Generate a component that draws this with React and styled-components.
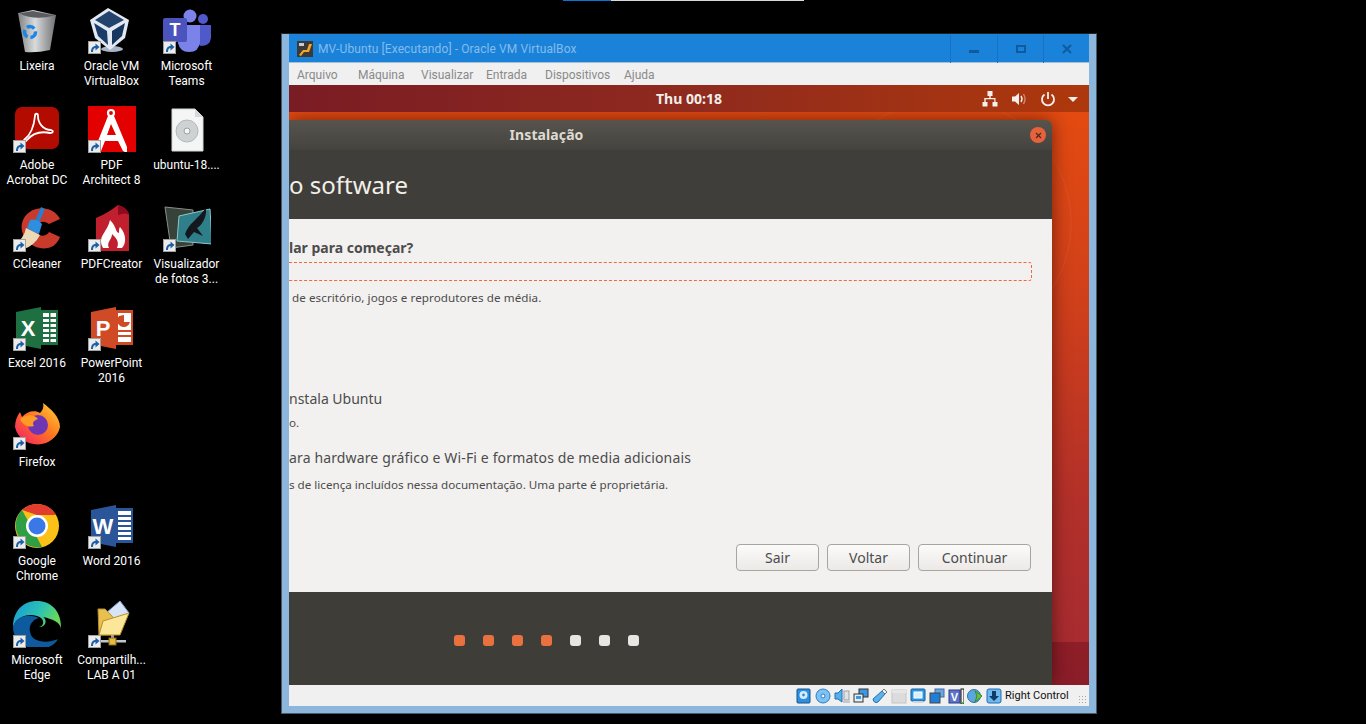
import React from 'react';
import styled, { createGlobalStyle } from 'styled-components';

const GlobalStyle = createGlobalStyle`
  html, body { margin: 0; padding: 0; background: #000; }
  * { box-sizing: border-box; }
`;

const Bin = () => (
  <svg viewBox="0 0 48 48">
    <defs>
      <linearGradient id="bin" x1="0" x2="1"><stop offset="0" stopColor="#7f8284" /><stop offset=".45" stopColor="#d9dbdc" /><stop offset="1" stopColor="#6f7173" /></linearGradient>
    </defs>
    <path d="M5 8 L20 5 L43 10 L37 45 Q24 48 12 47 Z" fill="url(#bin)" />
    <path d="M6.5 8.5 L20 6 L41.5 10.5 Q22 16 6.5 8.5 Z" fill="#5a5d60" />
    <circle cx="17" cy="27" r="5.5" fill="none" stroke="#1c86e6" strokeWidth="3.5" strokeDasharray="8 3" />
  </svg>
);
const VBox = () => (
  <svg viewBox="0 0 48 48">
    <ellipse cx="24" cy="44" rx="11" ry="3" fill="#a9b4c9" />
    <path d="M20 3 L41 15 L37 33 L22 45 L7 33 L2 15 Z" fill="#e3e9f3" />
    <path d="M21 6 L36 15 L21 23 L7 15 Z" fill="#23436d" />
    <path d="M6 18 L19 26 L20 40 L10 31 Z" fill="#1b3c66" />
    <path d="M24 26 L37 18 L34 31 L24 40 Z" fill="#16365e" />
  </svg>
);
const Teams = () => (
  <svg viewBox="0 0 48 48">
    <circle cx="27" cy="11" r="6.5" fill="#7b83eb" />
    <circle cx="40" cy="14" r="5" fill="#5059c9" />
    <path d="M33 20 H48 V33 Q47 41 38 41 L33 38 Z" fill="#5059c9" />
    <path d="M15 20 H37 V37 Q36 47 26 47 Q17 47 15 38 Z" fill="#7b83eb" />
    <rect x="0" y="13" width="24" height="24" rx="2" fill="#4b53bc" />
    <text x="12" y="31" textAnchor="middle" fill="#fff" fontSize="18" fontWeight="700" fontFamily="Liberation Sans">T</text>
  </svg>
);
const Acrobat = () => (
  <svg viewBox="0 0 48 48">
    <rect x="2" y="3" width="44" height="42" rx="7" fill="#b30b00" />
    <path d="M12 35 C17 31 21 22 22 12 C22 9 25 9 25 12 C25 19 30 26 38 26 C41 27 40 29 37 29 C28 27 20 29 14 36 C11 39 10 37 12 35 Z" fill="none" stroke="#fff" strokeWidth="1.8" />
  </svg>
);
const Architect = () => (
  <svg viewBox="0 0 48 48">
    <rect x="0" y="2" width="48" height="48" fill="#e30000" />
    <circle cx="23" cy="9" r="3" fill="none" stroke="#fff" strokeWidth="2.2" />
    <path d="M20 12 L6 47 L13 47 L17 37 H30 L35 47 L39 49 L39 43 L26 12 Z M19 31 L23 20 L28 31 Z" fill="#fff" fillRule="evenodd" />
  </svg>
);
const IsoFile = () => (
  <svg viewBox="0 0 48 48">
    <path d="M9 5 H32 L40 13 V47 H9 Z" fill="#f4f5f5" stroke="#d3d6d8" />
    <path d="M32 5 V13 H40 Z" fill="#d6d9dc" />
    <circle cx="24" cy="27" r="11" fill="#cfd2d4" stroke="#b4b8ba" />
    <circle cx="24" cy="27" r="3" fill="#f4f5f5" stroke="#9b9fa2" />
  </svg>
);
const CCleaner = () => (
  <svg viewBox="0 0 48 48">
    <path d="M47 16 C40 1 14 1 9 20 C6 34 20 48 35 45 C40 44 44 41 47 34 L36 29 C33 34 26 34 24 29 C21 22 28 15 36 21 Z" fill="#c9392c" />
    <path d="M28 4 L32 6 L26 20 L22 18 Z" fill="#2b7ecb" />
    <path d="M17 17 Q24 15 29 21 L26 31 Q20 29 14 25 Z" fill="#2e8fe0" />
    <path d="M13 25 L27 32 Q22 42 11 46 L1 41 Q11 36 13 25 Z" fill="#ecd9b6" />
  </svg>
);
const PdfCreator = () => (
  <svg viewBox="0 0 48 48">
    <path d="M8 15 Q20 10 30 2 Q40 5 41 12 V49 H8 Z" fill="#c01f2e" />
    <path d="M30 2 Q30 10 30 12 Q38 9 41 12 Q40 5 30 2 Z" fill="#8e0a1f" />
    <path d="M15 45 C9 33 19 30 22 17 C29 24 27 29 31 30 C31 27 31 25 32 24 C39 32 38 41 34 45 L29 45 C32 38 27 34 24 31 C24 37 18 39 21 45 Z" fill="#fff" />
  </svg>
);
const Viewer = () => (
  <svg viewBox="0 0 48 48">
    <path d="M2 4 L30 7 V42 L8 45 Z" fill="#37423a" stroke="#8a8f86" />
    <path d="M16 13 L47 6 L49 41 L14 38 Z" fill="#2e7f89" stroke="#8fc6c9" />
    <path d="M22 31 C26 20 34 17 43 5 C44 14 39 22 34 25 L40 33 L31 29 L25 36 Z" fill="#14171b" />
  </svg>
);
const OfficeDoc = ({ tile, page, letter, children }) => (
  <svg viewBox="0 0 48 48">
    <path d="M24 8 H45 V43 H24 Z" fill={page} />
    {children}
    <path d="M3 10 L28 5 V47 L3 42 Z" fill={tile} />
    <text x="15" y="34" textAnchor="middle" fill="#fff" fontSize="22" fontWeight="700" fontFamily="Liberation Sans">{letter}</text>
  </svg>
);
const lines = (x, w, c) => [15, 20, 25, 30, 35].map(y => <rect key={y} x={x} y={y} width={w} height="2" fill={c} />);
const Excel = () => <OfficeDoc tile="#1e6f42" page="#1e6f42" letter="X"><rect x="30" y="11" width="13" height="29" fill="#fff" />{lines(30, 13, '#1e6f42')}<rect x="36" y="11" width="1.5" height="29" fill="#1e6f42" /></OfficeDoc>;
const Word = () => <OfficeDoc tile="#2a5699" page="#2a5699" letter="W"><rect x="30" y="11" width="13" height="29" fill="#fff" />{lines(30, 13, '#2a5699')}</OfficeDoc>;
const PowerPoint = () => (
  <OfficeDoc tile="#d04a25" page="#d04a25" letter="P">
    <rect x="30" y="11" width="13" height="29" fill="#fff" />
    <path d="M31 14 a6.5 6.5 0 1 0 11 6 h-6 v-7z" fill="#d04a25" />
    <rect x="30" y="28" width="13" height="2" fill="#d04a25" /><rect x="30" y="33" width="13" height="2" fill="#d04a25" />
  </OfficeDoc>
);
const Firefox = () => (
  <svg viewBox="0 0 48 48">
    <defs>
      <linearGradient id="fx" x1="1" y1="0" x2="0" y2="1"><stop offset="0" stopColor="#ffd93a" /><stop offset=".45" stopColor="#ff7a1f" /><stop offset="1" stopColor="#f5156c" /></linearGradient>
    </defs>
    <path d="M30 2 C38 8 47 16 47 26 A23 22 0 0 1 2 26 C2 20 4 15 7 11 L9 16 C14 10 22 9 27 12 C30 9 31 6 30 2 Z" fill="url(#fx)" />
    <circle cx="25" cy="24" r="10" fill="#6e36b5" />
    <path d="M7 18 C14 12 22 14 25 18 C20 20 19 22 21 25 C15 27 10 24 7 18 Z" fill="#ff9a24" />
  </svg>
);
const Chrome = () => (
  <svg viewBox="0 0 48 48">
    <circle cx="24" cy="26" r="22" fill="#fbc116" />
    <path d="M24 4 A22 22 0 0 1 43 15 L24 15 L9 10 A22 22 0 0 1 24 4 Z" fill="#e33b2e" />
    <path d="M9 10 L19 28 L29 47 A22 22 0 0 1 9 10 Z" fill="#2f9e44" />
    <circle cx="24" cy="26" r="11" fill="#fff" />
    <circle cx="24" cy="26" r="8.5" fill="#3b78e7" />
  </svg>
);
const Edge = () => (
  <svg viewBox="0 0 48 48">
    <defs>
      <linearGradient id="eg" x1="0" y1="0" x2="1" y2=".4"><stop offset="0" stopColor="#1696d8" /><stop offset=".6" stopColor="#2cc2b4" /><stop offset="1" stopColor="#66d95a" /></linearGradient>
    </defs>
    <path d="M48 28 C48 12 38 2 24 2 C10 2 0 12 0 28 C4 18 14 14 24 17 C32 19 32 27 26 28 L48 30 Z" fill="url(#eg)" />
    <path d="M0 28 C0 42 12 50 26 50 C34 50 42 46 45 40 C36 44 22 44 18 36 C14 27 20 20 26 19 C14 14 2 18 0 28 Z" fill="#0d5a9e" />
    <path d="M26 28 C34 28 34 20 30 18 C40 20 48 24 48 30 C47 34 46 38 45 40 C36 43 26 40 26 28 Z" fill="#000" />
  </svg>
);
const SharedFolder = () => (
  <svg viewBox="0 0 48 48">
    <path d="M18 14 L32 2 L41 14 L30 26 Z" fill="#d6e4f6" stroke="#7aa0cf" />
    <path d="M10 10 H17 L22 15 L30 24 L24 36 H11 Z" fill="#e9bf4f" stroke="#b88f2a" />
    <path d="M15 22 L41 14 L32 36 H11 Z" fill="#fbe69a" stroke="#b88f2a" />
    <rect x="23" y="36" width="3" height="4" fill="#9aa0a6" />
    <rect x="12" y="41" width="26" height="2.5" fill="#c2c6ca" />
    <rect x="21" y="39" width="7" height="7" fill="#e6b93f" stroke="#8a6a1c" />
  </svg>
);

const desktop = [
  { name: 'Lixeira', art: Bin, plain: true },
  { name: 'Oracle VM\nVirtualBox', art: VBox },
  { name: 'Microsoft\nTeams', art: Teams },
  { name: 'Adobe\nAcrobat DC', art: Acrobat },
  { name: 'PDF\nArchitect 8', art: Architect },
  { name: 'ubuntu-18....', art: IsoFile, plain: true },
  { name: 'CCleaner', art: CCleaner },
  { name: 'PDFCreator', art: PdfCreator },
  { name: 'Visualizador\nde fotos 3...', art: Viewer },
  { name: 'Excel 2016', art: Excel },
  { name: 'PowerPoint\n2016', art: PowerPoint },
  null,
  { name: 'Firefox', art: Firefox },
  null,
  null,
  { name: 'Google\nChrome', art: Chrome },
  { name: 'Word 2016', art: Word },
  null,
  { name: 'Microsoft\nEdge', art: Edge },
  { name: 'Compartilh...\nLAB A 01', art: SharedFolder },
];

const S = ({ children }) => <svg viewBox="0 0 16 16">{children}</svg>;
const trayIcons = [
  <S><rect x="1" y="1" width="13" height="14" rx="1" fill="#2d8fe0" stroke="#14558f" /><circle cx="7.5" cy="7" r="4" fill="#d7ecfb" /><circle cx="7.5" cy="7" r="1.4" fill="#2d8fe0" /></S>,
  <S><circle cx="8" cy="8" r="7" fill="#7cc3f3" stroke="#2d7cc0" /><circle cx="8" cy="8" r="2" fill="#eaf6fe" stroke="#2d7cc0" /></S>,
  <S><path d="M1 5 H4 L8 1 V14 L4 11 H1 Z" fill="#57aee8" stroke="#1d6fb5" /><rect x="10" y="3" width="5" height="9" fill="#dfe3e6" stroke="#9aa1a6" /><rect x="9" y="13" width="7" height="2" fill="#c3c8cc" /></S>,
  <S><rect x="6" y="1" width="9" height="8" fill="#3f97df" stroke="#333" /><rect x="1" y="6" width="9" height="8" fill="#dff0fb" stroke="#333" /><rect x="3" y="8" width="5" height="3" fill="#3f97df" /></S>,
  <S><path d="M1 11 L10 3 L13 6 L6 14 Q2 16 1 11 Z" fill="#5cb0ec" stroke="#1d6fb5" /><path d="M10 3 L12 1 L15 4 L13 6 Z" fill="#eef2f5" stroke="#777" /></S>,
  <S><rect x="1" y="2" width="14" height="13" fill="#dcdcdc" stroke="#c4c4c4" /><rect x="1" y="2" width="14" height="3" fill="#e6e6e6" /></S>,
  <S><rect x="1" y="1" width="14" height="12" rx="1" fill="#2c97e5" stroke="#16609e" /><rect x="4" y="4" width="8" height="6" fill="#d9effc" stroke="#fff" /><rect x="3" y="13" width="10" height="2" fill="#cfd4d8" /></S>,
  <S><rect x="6" y="1" width="9" height="8" fill="#6aa5e0" stroke="#3a6ea5" /><rect x="1" y="5" width="10" height="10" fill="#1f7fd6" stroke="#444" /></S>,
  <S><rect x="1" y="2" width="11" height="13" fill="#5d74c9" stroke="#2a3b86" /><text x="6.5" y="13" textAnchor="middle" fontSize="11" fontWeight="700" fill="#fff" fontFamily="Liberation Sans">V</text><rect x="13" y="1" width="3" height="15" fill="#f4f4f4" stroke="#111" strokeWidth="1" /><rect x="13.5" y="14" width="2" height="1.5" fill="#2fc12f" /></S>,
  <S><circle cx="7" cy="8" r="6.5" fill="#5aa7e0" stroke="#2a6ea8" /><path d="M8 3 L15 8 L8 14 L10 8 Z" fill="#6cc24a" stroke="#3b8a22" /></S>,
  <S><rect x="1" y="1" width="14" height="14" rx="2" fill="#6fb9f0" stroke="#1d6fb5" /><path d="M6 3 H10 V8 H13 L8 13 L3 8 H6 Z" fill="#123a66" /></S>,
];

export default function App() {
  return (
    <Page>
      <GlobalStyle />
      <TopStrip><TopStripFill /></TopStrip>
      <IconGrid>
        {desktop.map((item, i) =>
          item ? (
            <DesktopIcon key={i}>
              <IconBox>
                <item.art />
                {!item.plain && (
                  <ShortcutBadge>
                    <svg width="11" height="11" viewBox="0 0 11 11">
                      <path d="M2 10 C2 6 4 4 6.5 4 V1.5 L10.5 5 L6.5 8.5 V6 C5 6 4 7.5 4 10 Z" fill="#1c5fa8" />
                    </svg>
                  </ShortcutBadge>
                )}
              </IconBox>
              <IconLabel>{item.name}</IconLabel>
            </DesktopIcon>
          ) : (
            <span key={i} />
          )
        )}
      </IconGrid>

      <VmWindow>
        <TitleBar>
          <AppLogo viewBox="0 0 16 16">
            <rect width="16" height="16" fill="#3a3a3a" />
            <path d="M2 14 L6 9 L10 9 L12 3 L15 3 L12 11 L7 11 L4 15 Z" fill="#f5a623" />
            <rect x="2" y="2" width="5" height="3" fill="#ccc" />
          </AppLogo>
          <TitleText>MV-Ubuntu [Executando] - Oracle VM VirtualBox</TitleText>
          <WinButton $w={47}><MinGlyph /></WinButton>
          <WinButton $w={46}><MaxGlyph /></WinButton>
          <WinButton $w={46}>
            <svg width="10" height="10" viewBox="0 0 10 10"><path d="M1 1 L9 9 M9 1 L1 9" stroke="#0f5b9e" strokeWidth="2" /></svg>
          </WinButton>
        </TitleBar>
        <MenuBar>
          <MenuItem $w={61}>Arquivo</MenuItem>
          <MenuItem $w={63}>Máquina</MenuItem>
          <MenuItem $w={65}>Visualizar</MenuItem>
          <MenuItem $w={59}>Entrada</MenuItem>
          <MenuItem $w={79}>Dispositivos</MenuItem>
          <MenuItem>Ajuda</MenuItem>
        </MenuBar>

        <Screen>
          <GnomeBar>
            <Clock>Thu 00:18</Clock>
            <GnomeTray>
              <svg width="16" height="16" viewBox="0 0 16 16"><path d="M5.5 0 H10.5 V5 H8.7 V7 H13.5 V11 H15.5 V15.5 H10.5 V11 H12.3 V8.3 H3.7 V11 H5.5 V15.5 H0.5 V11 H2.3 V7 H7.3 V5 H5.5 Z" fill="#f4f1ec" /></svg>
              <svg width="16" height="16" viewBox="0 0 16 16">
                <path d="M1 5.5 H4 L8 2 V14 L4 10.5 H1 Z" fill="#f4f1ec" />
                <path d="M10 5 Q12 8 10 11" stroke="#f4f1ec" strokeWidth="1.4" fill="none" />
                <path d="M12.5 3 Q15.5 8 12.5 13" stroke="#f4f1ec" strokeOpacity=".45" strokeWidth="1.4" fill="none" />
              </svg>
              <svg width="16" height="16" viewBox="0 0 16 16"><path d="M8 1 V8" stroke="#f4f1ec" strokeWidth="1.8" /><path d="M4.5 3.5 A6 6 0 1 0 11.5 3.5" stroke="#f4f1ec" strokeWidth="1.8" fill="none" /></svg>
              <Caret />
            </GnomeTray>
          </GnomeBar>
          <Dialog>
            <DialogTitle>
              <DialogName>Instalação</DialogName>
              <CloseDot>
                <svg width="7" height="7" viewBox="0 0 7 7"><path d="M1 1 L6 6 M6 1 L1 6" stroke="#4a2a1c" strokeWidth="1.2" /></svg>
              </CloseDot>
            </DialogTitle>
            <DialogHeader>o software</DialogHeader>
            <DialogBody>
              <Question>lar para começar?</Question>
              <FocusBox />
              <Hint $indent={3} $spread>de escritório, jogos e reprodutores de média.</Hint>
              <OptionLabel $top={83}>nstala Ubuntu</OptionLabel>
              <Hint $top={6}>o.</Hint>
              <OptionLabel $top={17} $wide>ara hardware gráfico e Wi-Fi e formatos de media adicionais</OptionLabel>
              <Hint $top={9}>s de licença incluídos nessa documentação. Uma parte é proprietária.</Hint>
              <ButtonRow>
                <PushButton $w={83}>Sair</PushButton>
                <PushButton $w={83}>Voltar</PushButton>
                <PushButton $w={113}>Continuar</PushButton>
              </ButtonRow>
            </DialogBody>
            <DialogFooter>
              {[1, 1, 1, 1, 0, 0, 0].map((on, i) => <StepDot key={i} $on={on} />)}
            </DialogFooter>
          </Dialog>
        </Screen>

        <StatusBar>
          {trayIcons.map((icon, i) => <TrayIcon key={i}>{icon}</TrayIcon>)}
          <HostKey>Right Control</HostKey>
          <Grip />
        </StatusBar>
      </VmWindow>
    </Page>
  );
}

const Page = styled.div`
  position: relative;
  width: 1366px;
  height: 724px;
  overflow: hidden;
  background: #000;
  display: flex;
  align-items: flex-start;
`;

const TopStrip = styled.div`
  position: absolute;
  top: 0;
  left: 563px;
  width: 241px;
  height: 1px;
  background: #d9d9d9;
`;

const TopStripFill = styled.div`
  width: 48px;
  height: 1px;
  background: #0a74d6;
`;

const IconGrid = styled.div`
  flex: none;
  width: 281px;
  padding-top: 5px;
  display: grid;
  grid-template-columns: 74px 75px 75px;
  grid-auto-rows: 99px;
`;

const DesktopIcon = styled.div`
  display: flex;
  flex-direction: column;
  align-items: center;
`;

const IconBox = styled.div`
  position: relative;
  width: 48px;
  height: 48px;
  > svg { display: block; width: 48px; height: 48px; }
`;

const ShortcutBadge = styled.div`
  position: absolute;
  left: 0;
  top: 36px;
  width: 13px;
  height: 13px;
  border: 1px solid #a0a0a0;
  background: #ececec;
  svg { display: block; }
`;

const IconLabel = styled.div`
  margin-top: 6px;
  font: 12px/15px Roboto, sans-serif;
  color: #fff;
  text-align: center;
  white-space: pre;
`;

const VmWindow = styled.div`
  flex: none;
  width: 816px;
  height: 681px;
  margin-top: 33px;
  border: 1px solid #4a5a68;
  border-top-color: #222;
  background: #8db6dc;
  padding: 0 7px 7px 7px;
  display: flex;
  flex-direction: column;
`;

const TitleBar = styled.div`
  height: 29px;
  flex: none;
  background: #1a82d9;
  border-bottom: 1px solid #a6c0d8;
  display: flex;
  align-items: center;
  padding: 1px 0 0 8px;
`;

const AppLogo = styled.svg`
  width: 16px;
  height: 16px;
  flex: none;
`;

const TitleText = styled.div`
  flex: 1;
  margin-left: 5px;
  font: 12px Roboto, sans-serif;
  letter-spacing: .1px;
  color: #85bcec;
`;

const WinButton = styled.div`
  width: ${p => p.$w}px;
  height: 28px;
  flex: none;
  border-left: 1px solid #1772bf;
  display: flex;
  align-items: center;
  justify-content: center;
`;

const MinGlyph = styled.div`
  width: 10px;
  height: 3px;
  margin-top: 5px;
  background: #0f5b9e;
`;

const MaxGlyph = styled.div`
  width: 10px;
  height: 8px;
  border: 2px solid #0f5b9e;
`;

const MenuBar = styled.div`
  height: 22px;
  flex: none;
  background: #f0f0f0;
  display: flex;
  align-items: center;
  padding: 2px 0 0 8px;
`;

const MenuItem = styled.div`
  width: ${p => (p.$w ? `${p.$w}px` : 'auto')};
  font: 12px Roboto, sans-serif;
  color: #8a8a8a;
`;

const Screen = styled.div`
  height: 600px;
  flex: none;
  overflow: hidden;
  display: flex;
  flex-direction: column;
  background:
    radial-gradient(circle at 658px 138px, transparent 123px, rgba(255, 255, 255, .05) 124px, transparent 125px),
    linear-gradient(to bottom, transparent 557px, rgba(80, 0, 20, .3) 557px),
    linear-gradient(to bottom, #e64c10 0%, #d0401a 35%, #b2302a 70%, #a42a32 100%);
`;

const GnomeBar = styled.div`
  height: 27px;
  flex: none;
  display: flex;
  align-items: center;
  background: linear-gradient(to right, #7a1c24, #8f2a1e 50%, #ae380c);
  position: relative;
`;

const Clock = styled.div`
  width: 800px;
  text-align: center;
  font: 700 14px "Noto Sans", sans-serif;
  color: #f2efe9;
`;

const GnomeTray = styled.div`
  position: absolute;
  left: 693px;
  top: 6px;
  display: flex;
  align-items: center;
  gap: 13px;
  svg { display: block; flex: none; }
`;

const Caret = styled.div`
  width: 0;
  height: 0;
  margin-left: -1px;
  border-left: 5px solid transparent;
  border-right: 5px solid transparent;
  border-top: 5px solid #f2efe9;
`;

const Dialog = styled.div`
  width: 763px;
  height: 565px;
  margin-top: 8px;
  border-radius: 0 6px 0 0;
  box-shadow: 0 0 18px rgba(30, 0, 0, .55);
  display: flex;
  flex-direction: column;
  overflow: hidden;
`;

const DialogTitle = styled.div`
  height: 30px;
  flex: none;
  position: relative;
  background: linear-gradient(#57544d, #45433f);
  display: flex;
  align-items: center;
  justify-content: center;
`;

const DialogName = styled.div`
  margin: -2px 248px 0 0;
  font: 700 14px "Noto Sans", sans-serif;
  letter-spacing: .1px;
  color: #dfdbd2;
`;

const CloseDot = styled.div`
  position: absolute;
  left: 741px;
  top: 7px;
  width: 16px;
  height: 16px;
  border-radius: 50%;
  background: #e7613a;
  display: flex;
  align-items: center;
  justify-content: center;
`;

const DialogHeader = styled.div`
  height: 69px;
  flex: none;
  background: #403e3a;
  padding-top: 19px;
  font: 24px/32px "Noto Sans", sans-serif;
  color: #f2efe9;
`;

const DialogBody = styled.div`
  height: 373px;
  flex: none;
  background: #f2f1f0;
  padding: 19px 21px 0 0;
  display: flex;
  flex-direction: column;
`;

const Question = styled.div`
  font: 700 14px/20px "Noto Sans", sans-serif;
  color: #4c4c4c;
`;

const FocusBox = styled.div`
  height: 19px;
  margin: 4px -1px 0 -8px;
  border: 1px dashed #ee6a3a;
  border-radius: 3px;
`;

const Hint = styled.div`
  margin-top: ${p => p.$top ?? 9}px;
  margin-left: ${p => p.$indent ?? 0}px;
  font: 11.65px/16px "Noto Sans", sans-serif;
  letter-spacing: ${p => (p.$spread ? '.07px' : '0')};
  color: #4c4c4c;
`;

const OptionLabel = styled.div`
  margin-top: ${p => p.$top}px;
  font: 14px/20px "Noto Sans", sans-serif;
  letter-spacing: ${p => (p.$wide ? '.14px' : '0')};
  color: #4c4c4c;
`;

const ButtonRow = styled.div`
  margin-top: 51px;
  display: flex;
  justify-content: flex-end;
  gap: 8px;
`;

const PushButton = styled.div`
  width: ${p => p.$w}px;
  height: 27px;
  border: 1px solid #a8a49e;
  border-radius: 4px;
  background: linear-gradient(#fbfbfa, #ece9e7);
  display: flex;
  align-items: center;
  justify-content: center;
  font: 14px "Noto Sans", sans-serif;
  color: #4c4c4c;
`;

const DialogFooter = styled.div`
  flex: 1;
  background: #3f3d38;
  display: flex;
  justify-content: center;
  gap: 18px;
  padding: 43px 249px 0 0;
`;

const StepDot = styled.div`
  width: 11px;
  height: 11px;
  border-radius: 3px;
  background: ${p => (p.$on ? '#e9713f' : '#e8e6e2')};
`;

const StatusBar = styled.div`
  flex: 1;
  background: #f0f0f0;
  display: flex;
  align-items: center;
  padding-left: 507px;
  white-space: nowrap;
`;

const TrayIcon = styled.div`
  width: 16px;
  height: 16px;
  flex: none;
  margin-right: 3px;
  svg { display: block; width: 16px; height: 16px; }
`;

const HostKey = styled.div`
  font: 11px Roboto, sans-serif;
  color: #111;
`;

const Grip = styled.div`
  width: 9px;
  height: 9px;
  margin: 8px 0 0 9px;
  background-image: radial-gradient(#a8a8a8 1px, transparent 1px);
  background-size: 3px 3px;
`;
